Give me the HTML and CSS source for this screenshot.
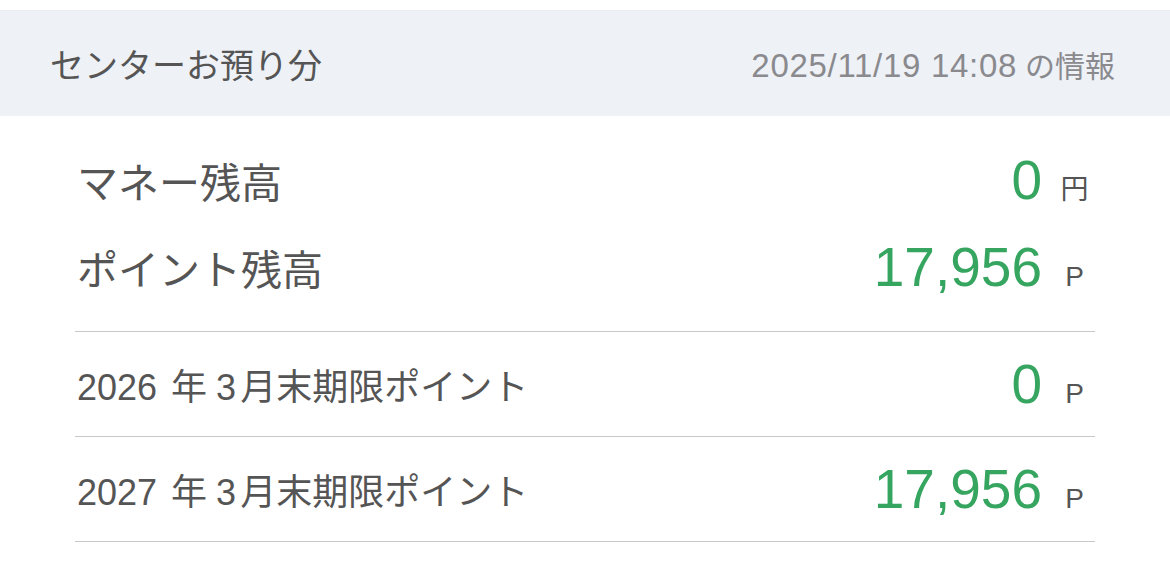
FILE: index.html
```html
<!DOCTYPE html>
<html lang="ja">
<head>
<meta charset="utf-8">
<link rel="stylesheet" href="styles.css">
</head>
<body>
<div class="page">
  <div class="header">
    <div class="header-title">センターお預り分</div>
    <div class="header-date"><span class="date-num">2025/11/19 14:08</span><span class="gap"></span>の情報</div>
  </div>
  <div class="content">
    <div class="summary">
      <div class="row big">
        <div class="label">マネー残高</div>
        <div class="value"><span class="num">0</span><span class="unit">円</span></div>
      </div>
      <div class="row big">
        <div class="label">ポイント残高</div>
        <div class="value"><span class="num">17,956</span><span class="unit">P</span></div>
      </div>
    </div>
    <div class="row small">
      <div class="label">2026<span class="g1"></span>年<span class="g2"></span>3<span class="g3"></span>月末期限ポイント</div>
      <div class="value"><span class="num">0</span><span class="unit">P</span></div>
    </div>
    <div class="row small">
      <div class="label">2027<span class="g1"></span>年<span class="g2"></span>3<span class="g3"></span>月末期限ポイント</div>
      <div class="value"><span class="num">17,956</span><span class="unit">P</span></div>
    </div>
  </div>
</div>
</body>
</html>
```
FILE: styles.css
```css
html, body {
  margin: 0;
  padding: 0;
  background: #ffffff;
}
body {
  font-family: "Liberation Sans", "Noto Sans CJK JP", sans-serif;
  color: #555555;
}
.page {
  padding-top: 10px;
}
.header {
  height: 106px;
  background: #eef1f6;
  display: flex;
  align-items: center;
  justify-content: space-between;
  padding: 0 55px 0 50px;
  border-top: 1px solid #e8ebf0;
  box-sizing: border-box;
}
.header-title {
  font-size: 34px;
  color: #555555;
  font-family: "Noto Sans CJK JP", sans-serif;
}
.header-date {
  font-size: 30px;
  color: #8a8a8e;
  display: flex;
  align-items: baseline;
}
.date-num {
  font-size: 33px;
  letter-spacing: 0.7px;
}
.gap {
  display: inline-block;
  width: 8px;
}
.content {
  margin: 0 75px;
}
.summary {
  padding: 20px 0 21px;
  border-bottom: 1.5px solid #c8c8c8;
}
.row {
  display: flex;
  align-items: center;
  justify-content: space-between;
}
.row.big {
  height: 87px;
}
.row.small {
  height: 104px;
  border-bottom: 1.5px solid #c8c8c8;
}
.label {
  display: flex;
  align-items: baseline;
  padding-left: 2px;
}
.big .label {
  font-size: 41px;
  font-family: "Noto Sans CJK JP", sans-serif;
}
.small .label {
  font-size: 36px;
}
.g1 {
  display: inline-block;
  width: 14px;
}
.g2 {
  display: inline-block;
  width: 9px;
}
.g3 {
  display: inline-block;
  width: 4px;
}
.value {
  display: flex;
  align-items: baseline;
}
.num {
  font-size: 55px;
  color: #36a560;
}
.unit {
  width: 41px;
  margin-left: 12px;
  text-align: center;
  font-size: 28px;
  color: #555555;
}
```
